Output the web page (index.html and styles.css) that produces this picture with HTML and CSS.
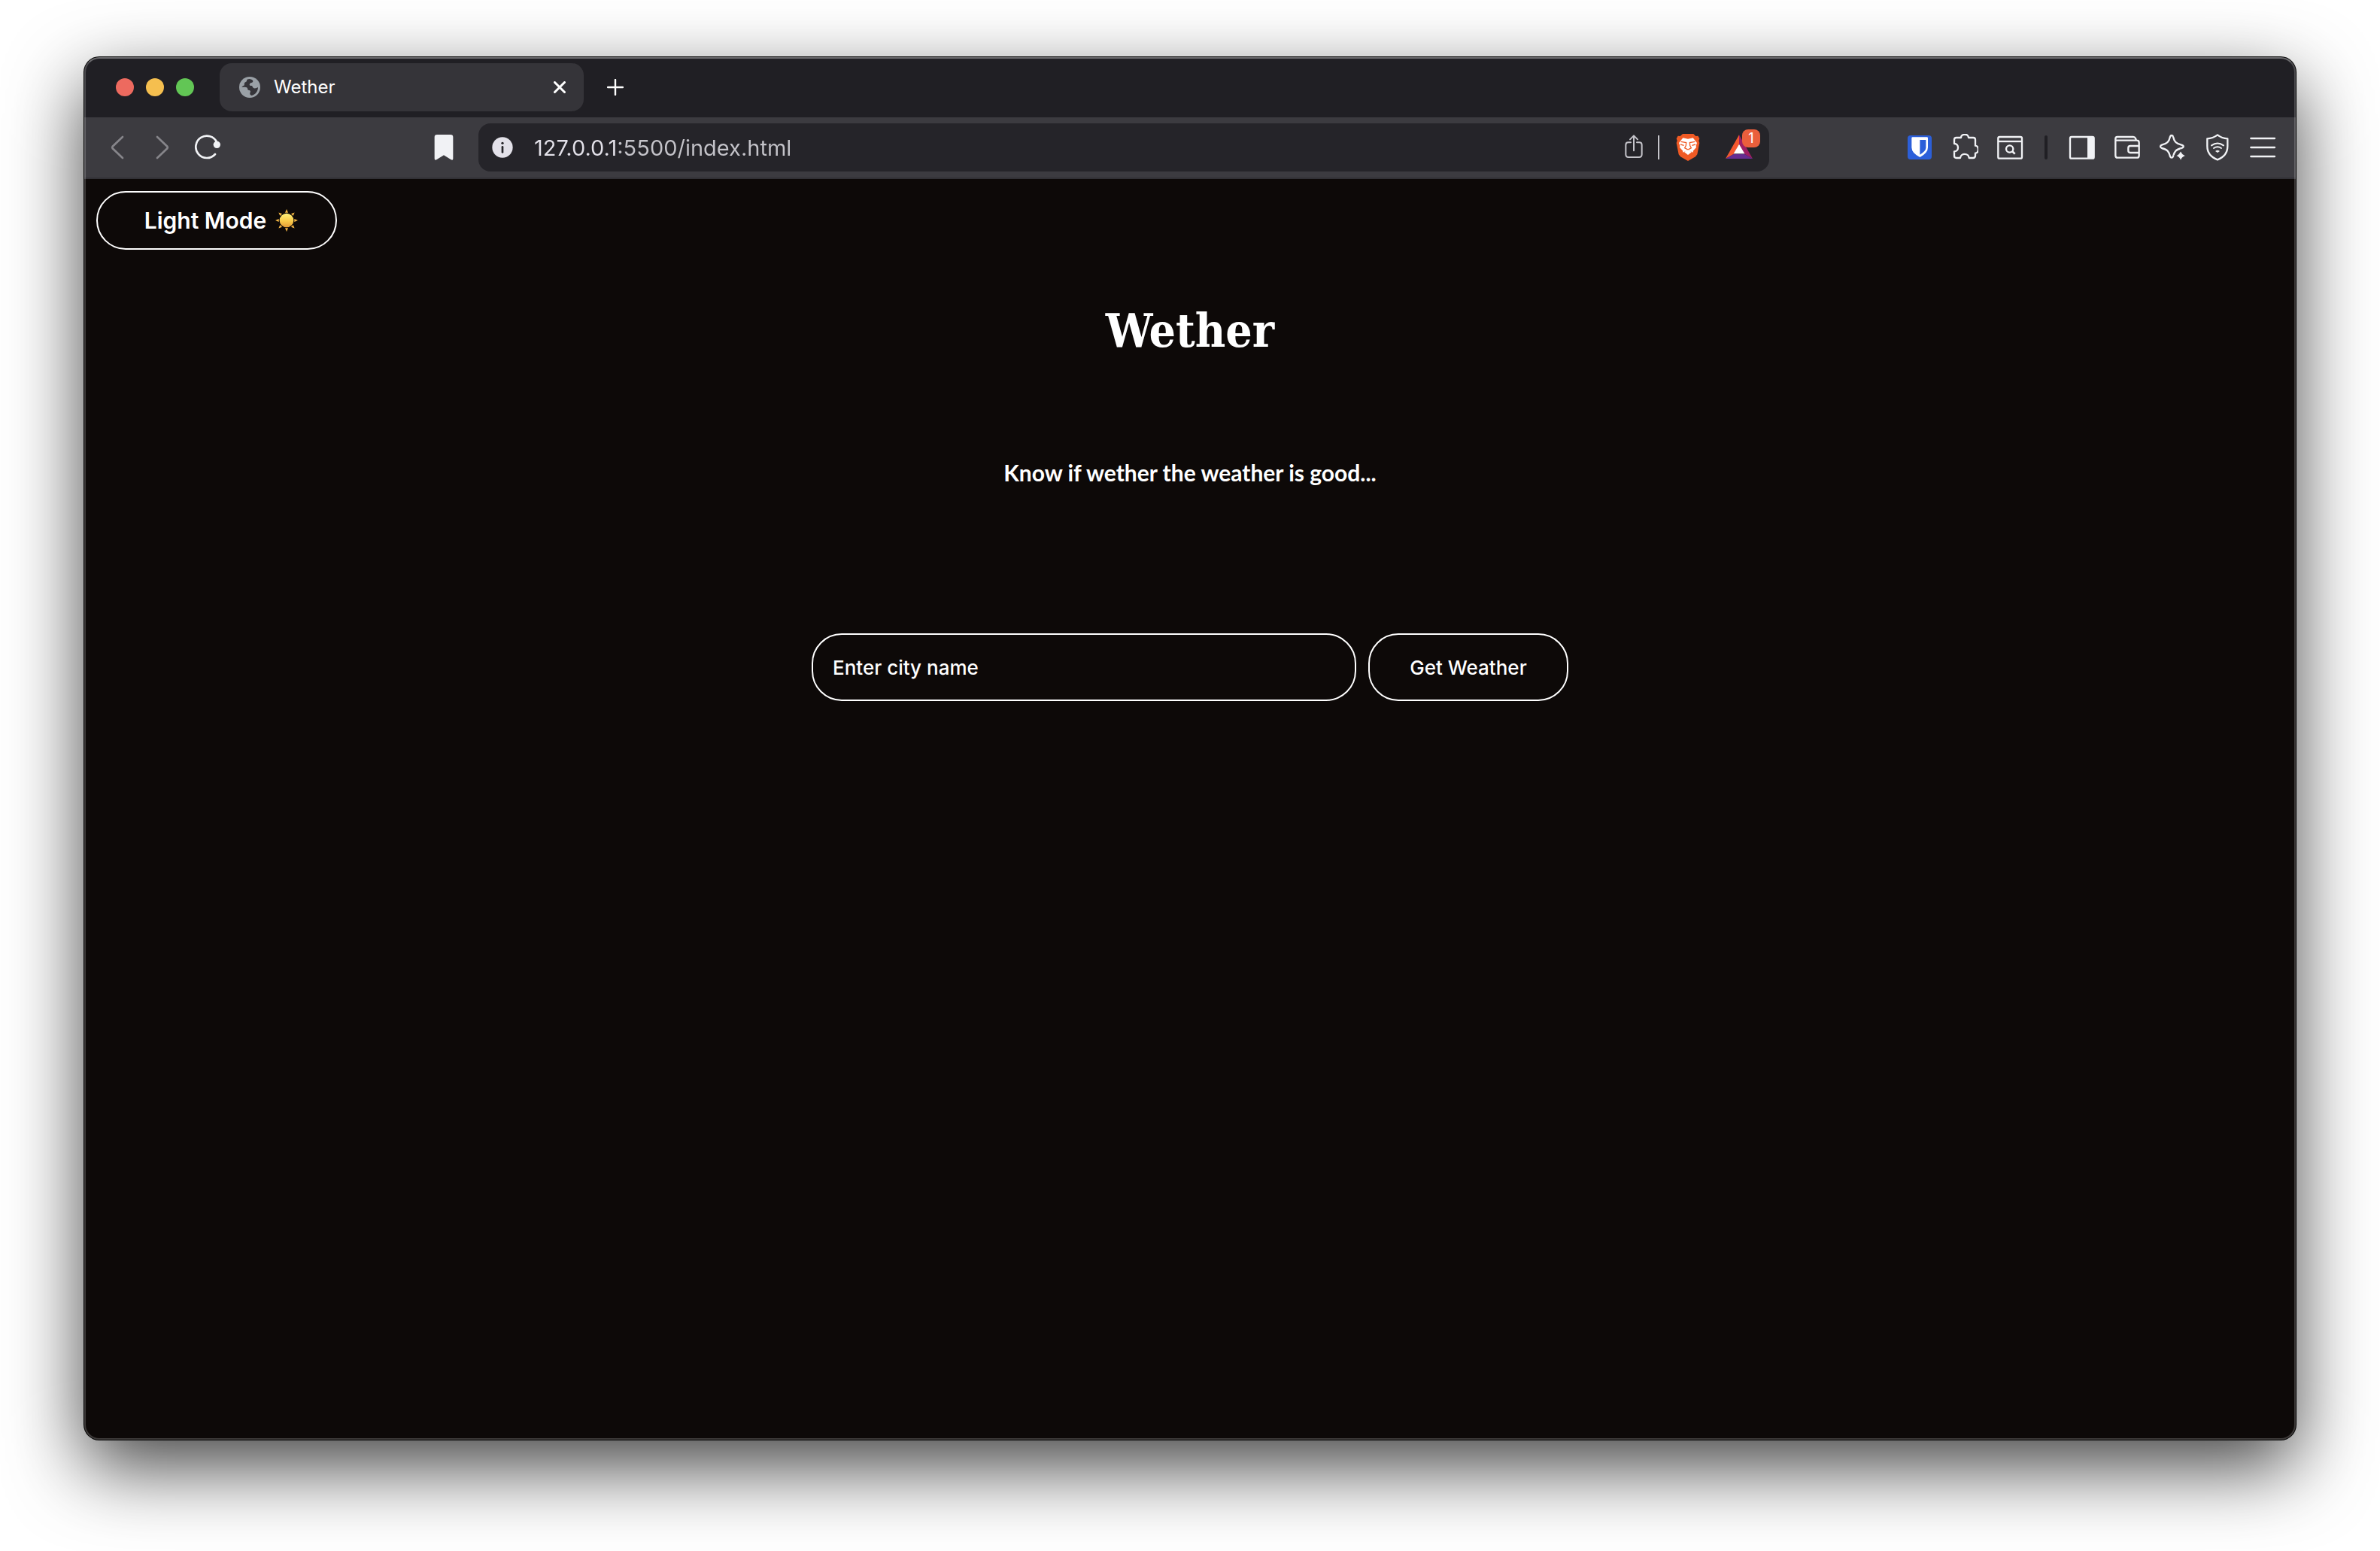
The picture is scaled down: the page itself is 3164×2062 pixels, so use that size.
FILE: index.html
```html
<!DOCTYPE html>
<html lang="en">
<head>
<meta charset="utf-8">
<title>Wether</title>
<link rel="stylesheet" href="styles.css">
</head>
<body>
<div class="window">
  <header class="tabbar">
    <div class="lights">
      <button class="light light-close" aria-label="Close window"></button>
      <button class="light light-min" aria-label="Minimize window"></button>
      <button class="light light-max" aria-label="Zoom window"></button>
    </div>
    <div class="tab">
      <svg class="globe" viewBox="654 126 84 84" aria-hidden="true"><circle cx="696" cy="168" r="42" fill="#9aa0a6"/><path d="M696 135c-8 0-12 2-12 7 0 6-5 4-8 8-4 4 1 9-3 11-4 1-7 3-9 7 8-2 22-1 23 4 0 6 0 8 6 8 6 1 6 5 4 9-1 6 0 10 6 12 16-3 26-17 26-33-6 4-15 6-19 2-4-3-2-8-8-8-8 0-8-6-5-9 3-4 8-2 11-6 3-5 0-9-12-12z" fill="#353439"/><path d="M663 168c8 0 22-1 24 4 0 6 0 8 6 8 6 1 5 5 4 9l-4 12c-17-1-30-16-30-33z" fill="#9aa0a6"/></svg>
      <span class="tab-title">Wether</span>
      <button class="tab-close" aria-label="Close tab"><svg viewBox="0 0 16 16"><path d="M1.500 1.500l13 13M14.500 1.500l-13 13" stroke="#fff" stroke-width="3" stroke-linecap="round"/></svg></button>
    </div>
    <button class="new-tab" aria-label="New tab"><svg viewBox="0 0 22 22"><path d="M11 1v20M1 11h20" stroke="#fff" stroke-width="2.400" stroke-linecap="round"/></svg></button>
  </header>

  <nav class="toolbar">
    <div class="tools tools-left">
      <button class="tool" aria-label="Back"><svg viewBox="114 354 108 108"><path d="M189 366l-40 38q-3 4 0 8l40 38" fill="none" stroke="#86858a" stroke-width="8" stroke-linecap="round"/></svg></button>
      <button class="tool" aria-label="Forward"><svg viewBox="294 354 108 108"><path d="M327 366l40 38q3 4 0 8l-40 38" fill="none" stroke="#86858a" stroke-width="8" stroke-linecap="round"/></svg></button>
      <button class="tool" aria-label="Reload"><svg viewBox="474 354 108 108"><path d="M558 435A44 44 0 1 1 565 388" fill="none" stroke="#f1f2f5" stroke-width="8" stroke-linecap="round"/><circle cx="565" cy="397" r="14" fill="#f1f2f5"/></svg></button>
      <button class="tool tool-end" aria-label="Bookmark"><svg viewBox="216 354 108 108"><path d="M243 357h54q10 0 10 10v85q0 9-8 5l-29-18-29 18q-8 4-8-5v-85q0-10 10-10z" fill="#f1f2f5"/></svg></button>
    </div>
    <div class="address">
      <svg class="info" viewBox="462 366 84 84" aria-hidden="true"><circle cx="504" cy="408" r="41" fill="#e3e1e9"/><circle cx="504" cy="391" r="5" fill="#252429"/><path d="M504 406v21" stroke="#252429" stroke-width="8" stroke-linecap="round"/></svg>
      <input class="url" type="text" aria-label="Address" value="127.0.0.1:5500/index.html">
      <button class="tool" aria-label="Share"><svg viewBox="162 114 108 108" fill="none" stroke="#c5c4ca" stroke-width="6" stroke-linecap="round" stroke-linejoin="round"><path d="M204 148h-10q-10 0-10 10v38q0 11 11 11h42q11 0 11-11v-38q0-10-10-10h-10M216 181v-58M201 136l15-15 15 15"/></svg></button>
      <span class="rule"></span>
      <button class="tool" aria-label="Brave Shields"><svg viewBox="378 114 108 108"><path d="M411 114h43l9 9 9-1 6 11-3 8 3 9-9 46-7 9-30 17-30-17-7-9-9-46 3-9-3-8 6-11 9 1z" fill="#f05a24"/><path d="M412 130l20 4 20-4 16 20-4 11 1 7-13 14 1 6-10-4-11-5-11 5-10 4 1-6-13-14 1-7-4-11z" fill="#fff"/><path d="M404 145l21 4-1 12-5 9 13 7 13-7-5-9-1-12 21-4" fill="none" stroke="#f05a24" stroke-width="4"/><path d="M402 156l14 4M462 156l-14 4" stroke="#f05a24" stroke-width="4"/><path d="M417 186l15-8 15 8-15 12z" fill="#fff"/></svg></button>
      <button class="tool rewards" aria-label="Brave Rewards"><svg viewBox="582 114 108 108"><path d="M636 118l-54 95 33-19 21-39z" fill="#f4582f"/><path d="M636 118l54 95-33-19-21-39z" fill="#9e1f63"/><path d="M582 213h108l-33-19h-42z" fill="#662d91"/><path d="M636 155l-22 38h44z" fill="#fff"/></svg><span class="badge">1</span></button>
    </div>
    <div class="tools tools-right">
      <button class="tool" aria-label="Bitwarden"><svg viewBox="102 114 108 108"><rect x="108" y="120" width="96" height="96" rx="12" fill="#2c5fd9"/><path d="M124 131q0-4 4-4h57q4 0 4 4v37q0 22-32 39-33-17-33-39z" fill="#fff"/><path d="M157 138h24v31q0 14-24 28z" fill="#2c5fd9"/></svg></button>
      <button class="tool" aria-label="Extensions"><svg viewBox="282 114 108 108"><path d="M294 153v-16q0-8 8-8h19c-1-15 29-19 30 0h19q8 0 8 8v24c15 0 16 30 0 30v10q0 9-9 9h-16c-1-20-33-21-35 0h-16q-8 0-8-8v-18c20 0 20-31 0-31z" fill="none" stroke="#f1f2f5" stroke-width="7" stroke-linejoin="round"/></svg></button>
      <button class="tool" aria-label="Search tabs"><svg viewBox="462 114 108 108" fill="none" stroke="#f1f2f5" stroke-width="7"><rect x="469" y="126" width="95" height="86" rx="6"/><path d="M469 144h95"/><circle cx="515" cy="174" r="14"/><path d="M525 183l11 11" stroke-width="8"/></svg></button>
      <span class="divider"></span>
      <button class="tool" aria-label="Sidebar"><svg viewBox="750 114 108 108"><rect x="756" y="126" width="95" height="86" rx="6" fill="none" stroke="#f1f2f5" stroke-width="7"/><path d="M825 126h26v86h-26z" fill="#f1f2f5"/></svg></button>
      <button class="tool" aria-label="Wallet"><svg viewBox="270 354 108 108" fill="none" stroke="#f1f2f5" stroke-width="7" stroke-linejoin="round"><path d="M284 366h64q6 0 9 6l3 8h2q9 0 9 9v51q0 9-9 9h-76q-9 0-9-9v-66q0-8 7-8zM278 380h84M371 402h-35q-8 0-8 8v11q0 8 8 8h35"/></svg></button>
      <button class="tool" aria-label="Leo AI"><svg viewBox="450 354 108 108"><path d="M501 360q5 0 6 5c5 21 11 27 33 33q8 2 8 6t-8 7c-22 6-28 12-33 33q-2 5-6 5t-6-5c-5-21-11-27-33-33q-6-3-6-7t6-6c22-6 28-12 33-33q2-5 6-5z" fill="none" stroke="#f1f2f5" stroke-width="7"/><path d="M537 419q5 17 22 22-17 5-22 22-5-17-22-22 17-5 22-22z" fill="#f1f2f5" stroke="#3c3b40" stroke-width="4"/></svg></button>
      <button class="tool" aria-label="VPN"><svg viewBox="630 354 108 108" fill="none" stroke="#f1f2f5" stroke-width="7" stroke-linejoin="round" stroke-linecap="round"><path d="M684 358q18 14 40 15v30q0 39-40 54-41-15-41-54v-30q22-1 41-15z"/><path d="M660 400q24-17 48 0M669 411q15-10 30 0" stroke-width="6"/><path d="M675 423q9-7 18 0l-9 6z" fill="#f1f2f5" stroke="none"/></svg></button>
      <button class="tool" aria-label="Menu"><svg viewBox="810 354 108 108"><path d="M817 372h95M817 408h95M817 444h95" stroke="#f1f2f5" stroke-width="7" stroke-linecap="round"/></svg></button>
    </div>
  </nav>

  <main class="page">
    <button class="pill mode">Light Mode
      <svg class="sun" viewBox="801 652 90 90" aria-hidden="true"><defs><linearGradient id="glow" x1="0" y1="0" x2="0" y2="1"><stop offset="0" stop-color="#fff27c"/><stop offset=".55" stop-color="#f9ca49"/><stop offset="1" stop-color="#e39a35"/></linearGradient></defs><g fill="#f2b443"><path id="ray" d="M846 652l6 14h-12z"/><use href="#ray" transform="rotate(45 846 697)"/><use href="#ray" transform="rotate(90 846 697)"/><use href="#ray" transform="rotate(135 846 697)"/><use href="#ray" transform="rotate(180 846 697)"/><use href="#ray" transform="rotate(225 846 697)"/><use href="#ray" transform="rotate(270 846 697)"/><use href="#ray" transform="rotate(315 846 697)"/></g><circle cx="846" cy="697" r="28" fill="url(#glow)"/></svg>
    </button>
    <h1 class="title">Wether</h1>
    <p class="tagline">Know if wether the weather is good...</p>
    <form class="search">
      <input class="pill city" type="text" placeholder="Enter city name" aria-label="City name">
      <button class="pill submit" type="button">Get Weather</button>
    </form>
  </main>
</div>
</body>
</html>
```
FILE: styles.css
```css
* {
  box-sizing: border-box;
}

body {
  margin: 0;
  min-height: 100vh;
  padding: 76px 112px 148px;
  display: flex;
  background: #fff;
  color: #fff;
  font-family: Inter, "Liberation Sans", sans-serif;
}

button,
input {
  margin: 0;
  padding: 0;
  border: 0;
  background: none;
  color: inherit;
  font: inherit;
}

svg {
  display: block;
}

.window {
  position: relative;
  flex: 1;
  min-width: 0;
  display: flex;
  flex-direction: column;
  border-radius: 20px;
  background: #0d0908;
  box-shadow: 0 0 0 1px #000, 0 36px 100px rgba(0, 0, 0, 0.74);
}

/* Light hairline that runs inside the window edge */
.window::after {
  content: "";
  position: absolute;
  inset: 0;
  border: 2px solid rgba(255, 255, 255, 0.2);
  border-top-color: rgba(255, 255, 255, 0.34);
  border-radius: 20px;
  pointer-events: none;
}

/* Tab strip */
.tabbar {
  height: 80px;
  display: flex;
  align-items: center;
  padding-left: 42px;
  border-radius: 20px 20px 0 0;
  background: #201f24;
}

.lights {
  display: flex;
  gap: 16px;
  margin-right: 34px;
}

.light {
  width: 24px;
  height: 24px;
  border-radius: 50%;
}

.light-close { background: #ed6a5f; }
.light-min { background: #f5bf4f; }
.light-max { background: #62c655; }

.tab {
  width: 484px;
  height: 64px;
  padding: 0 24px 0 26px;
  display: flex;
  align-items: center;
  border-radius: 16px;
  background: #353439;
}

.globe {
  width: 28px;
  height: 28px;
  margin-right: 18px;
}

.tab-title {
  flex: 1;
  font-size: 24px;
  line-height: 32px;
}

.tab-close svg {
  width: 16px;
  height: 16px;
}

.new-tab {
  margin-left: 31px;
}

.new-tab svg {
  width: 22px;
  height: 22px;
}

/* Toolbar */
.toolbar {
  height: 82px;
  display: flex;
  align-items: center;
  border-bottom: 2px solid #323136;
  background: #3c3b40;
}

.tools {
  display: flex;
  align-items: center;
  gap: 24px;
}

.tools-left {
  width: 524px;
  padding: 0 28px 0 26px;
}

.tools-right {
  width: 700px;
  padding-right: 26px;
  justify-content: flex-end;
}

.tool {
  flex: none;
  width: 36px;
  height: 36px;
}

.tool svg {
  width: 36px;
  height: 36px;
}

.tool-end {
  margin-left: auto;
}

.divider {
  width: 4px;
  height: 32px;
  margin: 0 4px;
  border-radius: 2px;
  background: #201f24;
}

.address {
  flex: 1;
  min-width: 0;
  height: 64px;
  display: flex;
  align-items: center;
  padding: 0 22px 0 18px;
  border-radius: 16px;
  background: #252429;
}

.info {
  flex: none;
  width: 28px;
  height: 28px;
  margin-right: 28px;
}

/* The host is brighter than the port and path */
.url {
  flex: 1;
  min-width: 0;
  height: 40px;
  font-size: 29px;
  background: linear-gradient(to right, #e3e1e9 112px, #c4c3c9 112px);
  -webkit-background-clip: text;
  background-clip: text;
  color: transparent;
}

.rule {
  width: 2px;
  height: 32px;
  margin: 0 20px 0 14px;
  background: #c5c4ca;
}

.rewards {
  position: relative;
  margin-left: 32px;
}

.badge {
  position: absolute;
  top: -6px;
  left: 22px;
  width: 24px;
  height: 24px;
  border-radius: 8px;
  background: #ea5f3c;
  font-size: 18px;
  line-height: 24px;
  text-align: center;
}

/* Web page */
.page {
  flex: 1;
  display: flex;
  flex-direction: column;
  align-items: center;
  padding: 16px;
}

.pill {
  border: 2px solid #fff;
  border-radius: 40px;
  font-weight: 500;
}

.mode {
  align-self: flex-start;
  width: 320px;
  height: 78px;
  padding-left: 12px;
  display: flex;
  align-items: center;
  justify-content: center;
  gap: 12px;
  font-size: 30px;
  font-weight: 600;
}

.sun {
  width: 30px;
  height: 30px;
}

.title {
  margin: 68px 0 0;
  font-family: "Roboto Slab", "DejaVu Serif Condensed", "DejaVu Serif", serif;
  font-size: 62px;
  font-weight: 700;
  line-height: 80px;
}

.tagline {
  margin: 128px 0 0;
  font-family: Lato, sans-serif;
  font-size: 30px;
  font-weight: 700;
  line-height: 40px;
}

.search {
  width: 1006px;
  max-width: 100%;
  margin-top: 194px;
  display: flex;
  gap: 16px;
  font-size: 26px;
}

.city {
  flex: 1;
  min-width: 0;
  height: 90px;
  padding: 0 26px;
}

.city::placeholder {
  color: #fff;
  opacity: 1;
}

.submit {
  width: 266px;
  height: 90px;
}
```
